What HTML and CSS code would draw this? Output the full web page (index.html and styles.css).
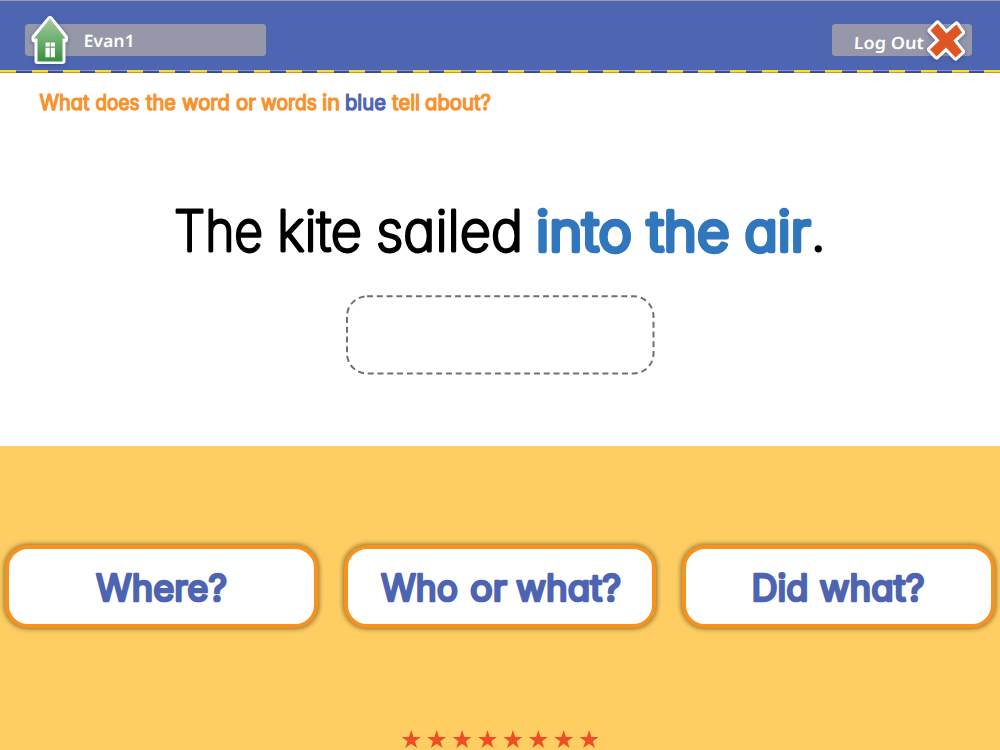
FILE: index.html
```html
<!DOCTYPE html>
<html lang="en">
<head>
<meta charset="utf-8">
<title>Sentence Practice</title>
<link rel="stylesheet" href="styles.css">
</head>
<body>
<header class="topbar">
  <div class="user">
    <svg class="home" width="42" height="54" viewBox="0 0 42 54">
      <defs>
        <linearGradient id="roof" x1="0" y1="0" x2="0" y2="1">
          <stop offset="0" stop-color="#a6cba3"/>
          <stop offset="1" stop-color="#35913b"/>
        </linearGradient>
      </defs>
      <path d="M21 5 L36 23.500 V25.500 H33.500 V47 H8.500 V25.500 H5.500 V23.500 Z" fill="#fff" stroke="#fff" stroke-width="6" stroke-linejoin="round"/>
      <path d="M21 4.500 L36.500 24.500 H33.500 V47.500 H8.500 V24.500 H5 Z" fill="url(#roof)"/>
      <path d="M16.500 28.500 h4.200 v4 h-4.200z M21.800 28.500 h4.200 v4 h-4.200z M16.500 33.700 h4.200 v9.500 h-4.200z M21.800 33.700 h4.200 v9.500 h-4.200z" fill="#fff"/>
    </svg>
    <svg class="label" width="60" height="32" viewBox="0 0 60 32"><text transform="translate(0.500 22.500) skewX(-1)" x="0" y="0" textLength="51" lengthAdjust="spacingAndGlyphs">Evan1</text></svg>
  </div>
  <div class="logout">
    <svg class="label" width="74" height="32" viewBox="0 0 74 32"><text transform="translate(0.500 24.500) skewX(-3)" x="0" y="0" textLength="70" lengthAdjust="spacingAndGlyphs">Log Out</text></svg>
    <svg class="close" width="44" height="46" viewBox="0 0 44 46">
      <path d="M12.500 5.500 L21.500 15.500 L31.500 6.500 L37 14.500 L28.300 22.500 L37 33.500 L30.500 39.500 L21 29.500 L11.500 38.500 L5 31.500 L14.500 22.500 L5.500 12.500 Z" fill="#fff" stroke="#fff" stroke-width="6" stroke-linejoin="round"/>
      <path d="M12.500 5.500 L21.500 15.500 L31.500 6.500 L37 14.500 L28.300 22.500 L37 33.500 L30.500 39.500 L21 29.500 L11.500 38.500 L5 31.500 L14.500 22.500 L5.500 12.500 Z" fill="#df5524"/>
    </svg>
  </div>
</header>
<main class="lesson">
  <svg class="prompt" width="1000" height="50" viewBox="0 0 1000 50">
    <text y="36.500"><tspan x="39.500" textLength="50" lengthAdjust="spacingAndGlyphs">What</tspan> <tspan x="95.500" textLength="44" lengthAdjust="spacingAndGlyphs">does</tspan> <tspan x="146" textLength="30" lengthAdjust="spacingAndGlyphs">the</tspan> <tspan x="182" textLength="48" lengthAdjust="spacingAndGlyphs">word</tspan> <tspan x="236" textLength="20" lengthAdjust="spacingAndGlyphs">or</tspan> <tspan x="261" textLength="56" lengthAdjust="spacingAndGlyphs">words</tspan> <tspan x="322" textLength="18" lengthAdjust="spacingAndGlyphs">in</tspan> <tspan class="key" x="345" textLength="41" lengthAdjust="spacingAndGlyphs">blue</tspan> <tspan x="392" textLength="28" lengthAdjust="spacingAndGlyphs">tell</tspan> <tspan x="425" textLength="66" lengthAdjust="spacingAndGlyphs">about?</tspan></text>
  </svg>
  <svg class="sentence" width="1000" height="70" viewBox="0 0 1000 70">
    <text y="55.600"><tspan x="174" textLength="89" lengthAdjust="spacingAndGlyphs">The</tspan> <tspan x="277" textLength="85" lengthAdjust="spacingAndGlyphs">kite</tspan> <tspan x="376" textLength="147" lengthAdjust="spacingAndGlyphs">sailed</tspan> <tspan class="answer" x="536" textLength="96" lengthAdjust="spacingAndGlyphs">into</tspan> <tspan class="answer" x="647" textLength="82.500" lengthAdjust="spacingAndGlyphs">the</tspan> <tspan class="answer" x="744.500" textLength="66" lengthAdjust="spacingAndGlyphs">air</tspan><tspan x="810.500">.</tspan></text>
  </svg>
  <svg class="slot" width="310" height="80" viewBox="0 0 310 80"><rect x="2" y="1.300" width="306.500" height="77.200" rx="20"/></svg>
</main>
<section class="choices">
  <div class="cards">
    <button class="card"><svg width="305" height="75" viewBox="0 0 305 75"><text y="51.500"><tspan x="87" textLength="131" lengthAdjust="spacingAndGlyphs">Where?</tspan></text></svg></button>
    <button class="card"><svg width="305" height="75" viewBox="0 0 305 75"><text y="51.500"><tspan x="33" textLength="77" lengthAdjust="spacingAndGlyphs">Who</tspan> <tspan x="122" textLength="37" lengthAdjust="spacingAndGlyphs">or</tspan> <tspan x="168" textLength="105" lengthAdjust="spacingAndGlyphs">what?</tspan></text></svg></button>
    <button class="card"><svg width="305" height="75" viewBox="0 0 305 75"><text y="51.500"><tspan x="65.500" textLength="57" lengthAdjust="spacingAndGlyphs">Did</tspan> <tspan x="133.500" textLength="105" lengthAdjust="spacingAndGlyphs">what?</tspan></text></svg></button>
  </div>
  <svg class="stars" width="200" height="22" viewBox="0 0 200 22">
    <defs><path id="star" d="M0 -10 L2.250 -3.100 H9.500 L3.700 1.200 L5.900 8.100 L0 3.850 L-5.900 8.100 L-3.700 1.200 L-9.500 -3.100 H-2.250 Z"/></defs>
    <use href="#star" x="11.200" y="12"/><use href="#star" x="36.700" y="12"/><use href="#star" x="62.100" y="12"/><use href="#star" x="87.500" y="12"/><use href="#star" x="112.900" y="12"/><use href="#star" x="138.300" y="12"/><use href="#star" x="163.700" y="12"/><use href="#star" x="189.100" y="12"/>
  </svg>
</section>
</body>
</html>
```
FILE: styles.css
```css
* { box-sizing: border-box; }
body {
  margin: 0;
  width: 1000px;
  height: 750px;
  overflow: hidden;
  background: #fff;
  font-family: Inter, "Liberation Sans", sans-serif;
  display: flex;
  flex-direction: column;
}
svg { display: block; overflow: visible; }
.topbar {
  height: 73px;
  flex: none;
  padding: 23.500px 28px 0 24.500px;
  display: flex;
  justify-content: space-between;
  align-items: flex-start;
  background:
    linear-gradient(#979cb4, #979cb4) 0 0 / 100% 1px no-repeat,
    repeating-linear-gradient(90deg, #fbdc2c 0 16.200px, transparent 16.200px 31.750px) 0 70px / 100% 2px no-repeat,
    repeating-linear-gradient(90deg, #c99e13 0 16.200px, #344a8d 16.200px 31.750px) 0 72px / 100% 1px no-repeat,
    linear-gradient(#8793c8, #8793c8) 0 70px / 100% 1px no-repeat,
    linear-gradient(#3e559c, #3e559c) 0 71px / 100% 2px no-repeat,
    #4e65b1;
}
.user, .logout {
  height: 32.500px;
  border-radius: 4px;
  background: #9698aa;
  box-shadow: 0 0 1px #7582b3;
  display: flex;
}
.user { width: 241.500px; }
.logout { width: 140px; padding-left: 21px; }
.home { flex: none; margin: -10px 12px 0 4.500px; filter: drop-shadow(0 1px 2px #34457899); }
.close { flex: none; margin: -5.500px 0 0 -2px; filter: drop-shadow(0 1px 2px #34457899); }
.label { flex: none; }
.label text {
  font: 600 17px "Noto Sans", sans-serif;
  fill: #fff;
}
.lesson { height: 373px; flex: none; display: flex; flex-direction: column; align-items: center; }
.prompt text, .sentence text, .card text {
  font-family: Inter, "Liberation Sans", sans-serif;
  font-feature-settings: "cv11" 1;
  stroke-linejoin: round;
  paint-order: stroke;
}
.prompt text {
  font-size: 21px;
  font-weight: 400;
  fill: #f7922d;
  stroke: #f7922d;
  stroke-width: 1.250px;
}
.prompt .key { fill: #4d64b2; stroke: #4d64b2; }
.sentence { margin-top: 72px; }
.sentence text {
  font-size: 56px;
  font-weight: 200;
  fill: #000;
  stroke: #000;
  stroke-width: 2.900px;
}
.sentence text .answer {
  font-size: 55px;
  font-weight: 300;
  fill: #3077bd;
  stroke: #3077bd;
  stroke-width: 4.500px;
}
.slot { margin-top: 30px; }
.slot rect { fill: none; stroke: #707070; stroke-width: 2px; stroke-dasharray: 6 3.780; }
.choices {
  height: 304px;
  flex: none;
  background: #ffce63;
  padding-top: 99px;
  display: flex;
  flex-direction: column;
  align-items: center;
}
.cards { display: flex; gap: 26px; }
.card {
  width: 312.500px;
  height: 83px;
  padding: 0;
  border: 4px solid #f7921f;
  border-radius: 23px;
  background: #fff;
  box-shadow: 0 0 5px 1px #8a7030;
}
.card text {
  font-size: 37px;
  font-weight: 400;
  fill: #4d64b2;
  stroke: #4d64b2;
  stroke-width: 2.700px;
}
.stars { margin-top: 100px; fill: #f04d24; }
```
